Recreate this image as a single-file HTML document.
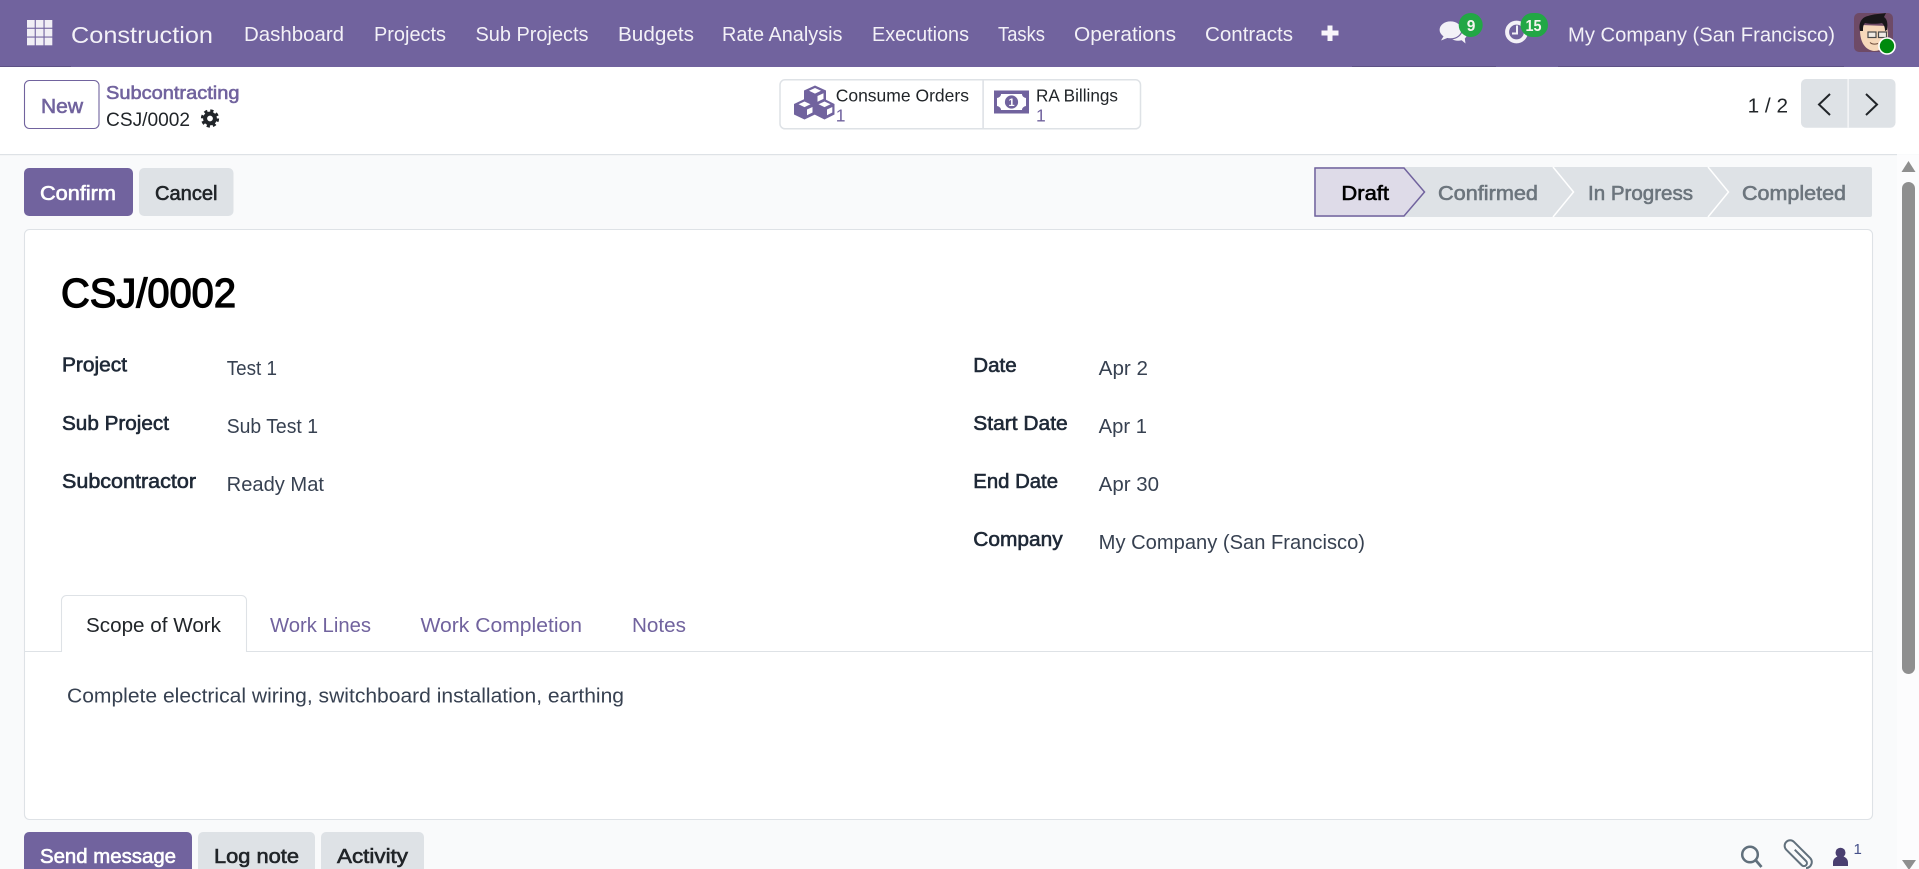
<!DOCTYPE html>
<html lang="en">
<head>
<meta charset="utf-8">
<title>CSJ/0002 - Subcontracting</title>
<style>
html,body{margin:0;padding:0;width:1919px;height:869px;overflow:hidden;background:#f9fafb}
svg{display:block}
text{font-family:"Liberation Sans",sans-serif;font-size:20px;white-space:pre}
.nav{fill:#f3f1f7;font-size:20.5px}
.sb{stroke-width:.6px}
.pur{fill:#71639e}
.pursb{fill:#71639e;stroke:#71639e}
.dk{fill:#212529}
.dksb{fill:#1f2937;stroke:#1f2937}
.val{fill:#374151}
.gry{fill:#6c757d;stroke:#6c757d}
.wh{fill:#fff;stroke:#fff}
.bd{fill:#212529;stroke:#212529}
</style>
</head>
<body>
<svg xmlns="http://www.w3.org/2000/svg" width="1919" height="869" viewBox="0 0 1919 869">
  <!-- page -->
  <rect width="1919" height="869" fill="#f9fafb"/>
  <rect x="1897" y="155" width="22" height="714" fill="#fcfcfd"/>

  <!-- control panel -->
  <rect y="66" width="1919" height="88" fill="#fff"/>
  <rect y="154" width="1897" height="1.2" fill="#dee2e6"/>

  <!-- navbar -->
  <rect width="1919" height="67" fill="#71639e"/>
  <rect x="0" y="66" width="71" height="1" fill="#5d5185"/>
  <rect x="1352" y="66" width="144" height="1" fill="#5d5185"/>
  <rect x="1558" y="66" width="286" height="1" fill="#5d5185"/>
  <g fill="#f0eef5">
    <rect x="27" y="20" width="7.700" height="7.700"/><rect x="35.800" y="20" width="7.700" height="7.700"/><rect x="44.600" y="20" width="7.700" height="7.700"/>
    <rect x="27" y="28.800" width="7.700" height="7.700"/><rect x="35.800" y="28.800" width="7.700" height="7.700"/><rect x="44.600" y="28.800" width="7.700" height="7.700"/>
    <rect x="27" y="37.600" width="7.700" height="7.700"/><rect x="35.800" y="37.600" width="7.700" height="7.700"/><rect x="44.600" y="37.600" width="7.700" height="7.700"/>
  </g>
  <text x="71" y="43" class="nav" style="font-size:23.5px" textLength="142" lengthAdjust="spacingAndGlyphs">Construction</text>
  <text x="244" y="41" class="nav" textLength="100" lengthAdjust="spacingAndGlyphs">Dashboard</text>
  <text x="374" y="41" class="nav" textLength="72" lengthAdjust="spacingAndGlyphs">Projects</text>
  <text x="475.5" y="41" class="nav" textLength="113" lengthAdjust="spacingAndGlyphs">Sub Projects</text>
  <text x="618" y="41" class="nav" textLength="76" lengthAdjust="spacingAndGlyphs">Budgets</text>
  <text x="722" y="41" class="nav" textLength="120.5" lengthAdjust="spacingAndGlyphs">Rate Analysis</text>
  <text x="872" y="41" class="nav" textLength="97" lengthAdjust="spacingAndGlyphs">Executions</text>
  <text x="998" y="41" class="nav" textLength="47" lengthAdjust="spacingAndGlyphs">Tasks</text>
  <text x="1074" y="41" class="nav" textLength="102" lengthAdjust="spacingAndGlyphs">Operations</text>
  <text x="1205" y="41" class="nav" textLength="88" lengthAdjust="spacingAndGlyphs">Contracts</text>
  <path d="M1330 25.500v15.500M1321.500 33h17" stroke="#f7f6fa" stroke-width="5" fill="none"/>

  <!-- systray: chat -->
  <g fill="#f3f1f7">
    <ellipse cx="1458" cy="34" rx="9" ry="6.800"/>
    <path d="M1459 38l6.500 5.500-1-7z"/>
    <ellipse cx="1450.500" cy="29.800" rx="11.500" ry="9" stroke="#71639e" stroke-width="1.200"/>
    <path d="M1444 35.500l-3 5 7.500-3z"/>
  </g>
  <circle cx="1470.7" cy="25" r="12" fill="#22a745"/>
  <text x="1471" y="30.8" text-anchor="middle" style="font-size:15.5px;font-weight:700;fill:#f5f5ee">9</text>
  <!-- systray: activities -->
  <circle cx="1516.5" cy="32" r="9.4" fill="none" stroke="#f3f1f7" stroke-width="4"/>
  <path d="M1517 25.500v8h-5" fill="none" stroke="#f3f1f7" stroke-width="2"/>
  <rect x="1520.5" y="13" width="27.5" height="24" rx="12" fill="#22a745"/>
  <text x="1525.5" y="30.8" style="font-size:15.5px;font-weight:700;fill:#f5f5ee" textLength="16" lengthAdjust="spacingAndGlyphs">15</text>
  <text x="1568" y="41.5" class="nav" textLength="267" lengthAdjust="spacingAndGlyphs">My Company (San Francisco)</text>

  <!-- avatar -->
  <rect x="1854" y="13" width="39" height="39" rx="5" fill="#6e4a66"/>
  <path d="M1860 30c0 12 5 20 14 21 8 0 14-6 14-17l-1-8-26-1z" fill="#f6d8ba"/>
  <path d="M1860 31c-2-8 2-14 8-15 5-2 12-2 18-3l-2 4c3 2 4 6 3 13l-2 1c0-4-1-6-3-8-5 1-12 1-17 0-2 2-2 5-2 8z" fill="#19171a"/>
  <rect x="1868" y="32" width="8" height="5.500" fill="#efeae3" stroke="#4a4a4a" stroke-width="1.200"/>
  <rect x="1878.500" y="32" width="8" height="5.500" fill="#efeae3" stroke="#4a4a4a" stroke-width="1.200"/>
  <path d="M1870 42.500c2 1.800 5 2 8 1" stroke="#6b4a3a" stroke-width="1" fill="none"/>
  <circle cx="1887" cy="46" r="8" fill="#008a0e" stroke="#fff" stroke-width="1.600"/>

  <!-- control panel left -->
  <rect x="24.500" y="80.500" width="74.500" height="48" rx="5" fill="#fff" stroke="#71639e" stroke-width="1.100"/>
  <text x="41" y="113" class="pursb sb" textLength="42" lengthAdjust="spacingAndGlyphs">New</text>
  <text x="106" y="99" class="pursb sb" style="font-size:18.5px" textLength="133.5" lengthAdjust="spacingAndGlyphs">Subcontracting</text>
  <text x="106" y="126" class="dk" style="font-size:19.5px" textLength="84" lengthAdjust="spacingAndGlyphs">CSJ/0002</text>
  <circle cx="210" cy="118.500" r="4.900" fill="none" stroke="#212529" stroke-width="4"/>
  <circle cx="210" cy="118.500" r="7.800" fill="none" stroke="#212529" stroke-width="2.600" stroke-dasharray="3.200 2.930"/>

  <!-- stat buttons -->
  <rect x="780" y="79.800" width="360.500" height="49" rx="5" fill="#fff" stroke="#dee2e6" stroke-width="1.500"/>
  <rect x="982.300" y="80" width="1.600" height="48.600" fill="#dee2e6"/>
  <g fill="#71639e">
    <path d="M815 85.500l11 5v11l-11 5-11-5v-11z"/>
    <path d="M804.500 99l10.500 5v10.500l-10.500 5L794 114.500V104z"/>
    <path d="M824.500 99l10 5v10.500l-10 5-10-5V104z"/>
  </g>
  <g fill="#fff">
    <path d="M815 88l6 2.800-6 2.800-6-2.800z"/>
    <path d="M804.500 101.500l6 2.800-6 2.800-6-2.800z"/>
    <path d="M824.500 101.500l6 2.800-6 2.800-6-2.800z"/>
    <path d="M807 109.500l5.500-2.500v5.500l-5.500 2.800z"/>
    <path d="M827 109.500l5.300-2.500v5.500l-5.300 2.800z"/>
    <path d="M817.500 96l6-2.700v5.600l-6 2.800z"/>
  </g>
  <rect x="994" y="90.500" width="35" height="23" fill="#71639e"/>
  <path d="M1001 94h21c0 2 1.500 3.500 4 4v8c-2.500.5-4 2-4 4h-21c0-2-1.500-3.500-4-4v-8c2.500-.5 4-2 4-4z" fill="#fff"/>
  <circle cx="1011.500" cy="102" r="6.600" fill="#71639e"/>
  <text x="1011.500" y="106" text-anchor="middle" style="font-size:11px;font-weight:700;fill:#fff">1</text>
  <text x="835.700" y="101.700" class="dk" style="font-size:17.500px" textLength="133.300" lengthAdjust="spacingAndGlyphs">Consume Orders</text>
  <text x="835.700" y="121.700" class="pur" style="font-size:17.500px">1</text>
  <text x="1036" y="101.700" class="dk" style="font-size:17.500px" textLength="82" lengthAdjust="spacingAndGlyphs">RA Billings</text>
  <text x="1036" y="121.700" class="pur" style="font-size:17.500px">1</text>

  <!-- pager -->
  <text x="1747.600" y="112.700" class="dk" textLength="40.400" lengthAdjust="spacingAndGlyphs">1 / 2</text>
  <rect x="1801" y="79" width="94.500" height="48.700" rx="5" fill="#dee2e6"/>
  <rect x="1847.600" y="79" width="1" height="48.700" fill="#fff"/>
  <path d="M1830 94l-11 10.500 11 10.500M1866 94l11 10.500-11 10.500" fill="none" stroke="#212529" stroke-width="2"/>

  <!-- action buttons -->
  <rect x="24" y="168" width="109" height="48" rx="5" fill="#71639e"/>
  <text x="40" y="200" class="wh sb" textLength="76" lengthAdjust="spacingAndGlyphs">Confirm</text>
  <rect x="139" y="168" width="94.500" height="48" rx="5" fill="#dee2e6"/>
  <text x="155" y="200" class="bd sb" textLength="62.500" lengthAdjust="spacingAndGlyphs">Cancel</text>

  <!-- status bar -->
  <rect x="1314" y="167" width="558" height="50" rx="2" fill="#dee2e6"/>
  <path d="M1553 167l20.500 25-20.500 25M1708 167l20.500 25-20.500 25" fill="none" stroke="#fff" stroke-width="1.500"/>
  <path d="M1315 168h89l20.500 24-20.500 24h-89z" fill="#dedbe8" stroke="#71639e" stroke-width="1.500"/>
  <text x="1341.400" y="200" class="bd sb" style="fill:#000;stroke:#000" textLength="47.600" lengthAdjust="spacingAndGlyphs">Draft</text>
  <text x="1438" y="200" class="gry sb" textLength="100" lengthAdjust="spacingAndGlyphs">Confirmed</text>
  <text x="1588" y="200" class="gry sb" textLength="105" lengthAdjust="spacingAndGlyphs">In Progress</text>
  <text x="1742" y="200" class="gry sb" textLength="104" lengthAdjust="spacingAndGlyphs">Completed</text>

  <!-- form sheet -->
  <rect x="24.500" y="229.500" width="1848" height="590" rx="5" fill="#fff" stroke="#dee2e6" stroke-width="1.100"/>
  <text x="61" y="307" style="font-size:41px;fill:#000;stroke:#000;stroke-width:1.300px" textLength="175" lengthAdjust="spacingAndGlyphs">CSJ/0002</text>

  <text x="62" y="371.700" class="dksb sb" textLength="65" lengthAdjust="spacingAndGlyphs">Project</text>
  <text x="62" y="430" class="dksb sb" textLength="107" lengthAdjust="spacingAndGlyphs">Sub Project</text>
  <text x="62" y="488" class="dksb sb" textLength="134" lengthAdjust="spacingAndGlyphs">Subcontractor</text>
  <text x="226.700" y="375" class="val" textLength="50.300" lengthAdjust="spacingAndGlyphs">Test 1</text>
  <text x="226.700" y="433" class="val" textLength="91.300" lengthAdjust="spacingAndGlyphs">Sub Test 1</text>
  <text x="226.700" y="491" class="val" textLength="97.300" lengthAdjust="spacingAndGlyphs">Ready Mat</text>

  <text x="973.300" y="372" class="dksb sb" textLength="43.400" lengthAdjust="spacingAndGlyphs">Date</text>
  <text x="973.300" y="430" class="dksb sb" textLength="94.400" lengthAdjust="spacingAndGlyphs">Start Date</text>
  <text x="973.300" y="488" class="dksb sb" textLength="84.700" lengthAdjust="spacingAndGlyphs">End Date</text>
  <text x="973.300" y="546" class="dksb sb" textLength="89.400" lengthAdjust="spacingAndGlyphs">Company</text>
  <text x="1098.700" y="375" class="val" textLength="49.300" lengthAdjust="spacingAndGlyphs">Apr 2</text>
  <text x="1098.700" y="433" class="val" textLength="48.300" lengthAdjust="spacingAndGlyphs">Apr 1</text>
  <text x="1098.700" y="491" class="val" textLength="60.300" lengthAdjust="spacingAndGlyphs">Apr 30</text>
  <text x="1098.700" y="549" class="val" textLength="266.300" lengthAdjust="spacingAndGlyphs">My Company (San Francisco)</text>

  <!-- tabs -->
  <path d="M25 651.500h36.500V600.500a5 5 0 0 1 5-5H241.500a5 5 0 0 1 5 5V651.500H1872" fill="none" stroke="#dee2e6" stroke-width="1.100"/>
  <text x="86" y="632" class="dk" textLength="135" lengthAdjust="spacingAndGlyphs">Scope of Work</text>
  <text x="270" y="632" class="pur" textLength="101" lengthAdjust="spacingAndGlyphs">Work Lines</text>
  <text x="420.500" y="632" class="pur" textLength="161.500" lengthAdjust="spacingAndGlyphs">Work Completion</text>
  <text x="632" y="632" class="pur" textLength="54" lengthAdjust="spacingAndGlyphs">Notes</text>
  <text x="67" y="702.700" class="val" textLength="557" lengthAdjust="spacingAndGlyphs">Complete electrical wiring, switchboard installation, earthing</text>

  <!-- chatter -->
  <rect x="24" y="832" width="168" height="50" rx="5" fill="#71639e"/>
  <text x="40" y="863" class="wh sb" textLength="136" lengthAdjust="spacingAndGlyphs">Send message</text>
  <rect x="198" y="832" width="117" height="50" rx="5" fill="#dee2e6"/>
  <text x="214" y="863" class="bd sb" textLength="85" lengthAdjust="spacingAndGlyphs">Log note</text>
  <rect x="321" y="832" width="103" height="50" rx="5" fill="#dee2e6"/>
  <text x="337" y="863" class="bd sb" textLength="71" lengthAdjust="spacingAndGlyphs">Activity</text>

  <circle cx="1750" cy="854.500" r="7.800" fill="none" stroke="#61707c" stroke-width="2.500"/>
  <path d="M1755.500 860l6 7" stroke="#61707c" stroke-width="2.800" fill="none"/>
  <g transform="translate(1796.500 855) rotate(45)" fill="none" stroke="#61707c" stroke-width="2">
    <path d="M-5-2.500H11a3 3 0 0 1 0 6H-11a5.500 5.500 0 0 1 0-11H12a6 6 0 0 1 4 10"/>
  </g>
  <circle cx="1840.500" cy="852.700" r="5" fill="#4a3f70"/>
  <path d="M1833 866v-3.500c0-3.500 2.500-5.500 5-6 1.500 1 3.500 1 5 0 2.500.5 5 2.500 5 6v3.500z" fill="#4a3f70"/>
  <text x="1853.500" y="854" style="font-size:15px;fill:#45508a">1</text>

  <!-- scrollbar -->
  <path d="M1908.500 161l7 11h-14z" fill="#8f8f8f"/>
  <rect x="1902" y="182" width="13" height="492" rx="6.500" fill="#8f8f8f"/>
  <path d="M1902 860h14l-7 10z" fill="#8f8f8f"/>
</svg>
</body>
</html>
